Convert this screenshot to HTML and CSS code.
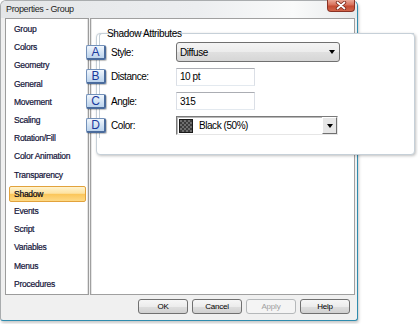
FILE: index.html
```html
<!DOCTYPE html>
<html>
<head>
<meta charset="utf-8">
<title>Properties - Group</title>
<link rel="stylesheet" href="styles.css">
</head>
<body>
<div class="dialog">
  <div class="titlebar">
    <span class="title">Properties - Group</span>
    <div class="close">
      <svg width="12" height="9" viewBox="0 0 12 9">
        <path d="M2.5 1.5 L9.5 7.5 M9.5 1.5 L2.5 7.5" stroke="#7a2a1c" stroke-width="3.4" stroke-linecap="round"/>
        <path d="M2.5 1.5 L9.5 7.5 M9.5 1.5 L2.5 7.5" stroke="#ffffff" stroke-width="1.7" stroke-linecap="round"/>
      </svg>
    </div>
  </div>
  <div class="main">
    <ul class="list">
      <li>Group</li>
      <li>Colors</li>
      <li>Geometry</li>
      <li>General</li>
      <li>Movement</li>
      <li>Scaling</li>
      <li>Rotation/Fill</li>
      <li>Color Animation</li>
      <li>Transparency</li>
      <li class="sel">Shadow</li>
      <li>Events</li>
      <li>Script</li>
      <li>Variables</li>
      <li>Menus</li>
      <li>Procedures</li>
    </ul>
    <div class="panel"></div>
  </div>
  <div class="footer">
    <button class="btn">OK</button>
    <button class="btn">Cancel</button>
    <button class="btn disabled">Apply</button>
    <button class="btn">Help</button>
  </div>
</div>

<div class="callout">
  <fieldset class="grp">
    <legend>Shadow Attributes</legend>
    <div class="row">
      <span class="badge">A</span>
      <span class="label">Style:</span>
      <div class="select"><span>Diffuse</span><span class="arrow"></span></div>
    </div>
    <div class="row">
      <span class="badge">B</span>
      <span class="label">Distance:</span>
      <div class="text">10 pt</div>
    </div>
    <div class="row">
      <span class="badge">C</span>
      <span class="label">Angle:</span>
      <div class="text">315</div>
    </div>
    <div class="row">
      <span class="badge">D</span>
      <span class="label">Color:</span>
      <div class="combo">
        <span class="swatch"></span>
        <span class="ctext">Black (50%)</span>
        <span class="dbtn"><span class="arrow"></span></span>
      </div>
    </div>
  </fieldset>
</div>
</body>
</html>
```

FILE: styles.css
```css
* { box-sizing: border-box; }
html, body { margin: 0; padding: 0; background: #ffffff; }
body {
  width: 418px;
  height: 324px;
  position: relative;
  overflow: hidden;
  font-family: "Liberation Sans", Arial, sans-serif;
  color: #000;
}

.dialog {
  width: 358px;
  height: 321px;
  background: #f0f0f0;
  border: 1px solid #a9acae;
  border-right-color: #2f8cae;
  border-bottom-color: #2f8cae;
  border-radius: 6px 6px 3px 3px;
  box-shadow: 1px 2px 3px rgba(0, 0, 0, 0.22);
  display: flex;
  flex-direction: column;
}

.titlebar {
  height: 17px;
  flex: none;
  display: flex;
  justify-content: space-between;
  align-items: flex-start;
  background: linear-gradient(to right, #e4e6e8 0%, #eceef0 55%, #f9fafa 82%, #e8eaeb 100%);
  border-radius: 5px 5px 0 0;
}
.title {
  font-size: 9px;
  letter-spacing: -0.35px;
  line-height: 17px;
  padding-left: 5px;
  color: #1e1e1e;
}
.close {
  width: 28px;
  height: 12px;
  margin: -1px 2px 0 0;
  border: 1px solid #8a3224;
  border-top: none;
  border-radius: 0 0 4px 4px;
  background: linear-gradient(#eaa896 0%, #d8705a 45%, #c34b31 55%, #d2654a 100%);
  display: flex;
  align-items: center;
  justify-content: center;
}
.close svg { display: block; }

.main {
  height: 277px;
  flex: none;
  display: flex;
  gap: 1px;
  padding: 0 2px 0 4px;
}
.list {
  width: 84px;
  margin: 0;
  padding: 1px 0 0 0;
  list-style: none;
  background: #fff;
  border: 1px solid #9c9c9c;
  box-shadow: inset -1px 0 0 #e4e4e4;
}
.list li {
  height: 18.2px;
  margin: 0 2px 0 3px;
  padding-left: 5px;
  display: flex;
  align-items: center;
  font-size: 8.5px;
  letter-spacing: -0.25px;
  color: #14143a;
  -webkit-text-stroke: 0.2px #14143a;
  white-space: nowrap;
}
.list li.sel {
  height: 16px;
  margin-top: 2px;
  margin-bottom: 0.2px;
  padding-left: 4px;
  border: 1px solid #e2a23c;
  border-radius: 2px;
  background: linear-gradient(#fff3cf 0%, #fde3a2 45%, #fbc65a 52%, #fdd985 100%);
  color: #000;
}
.panel {
  width: 265px;
  background: #fff;
  border: 1px solid #a0a0a0;
  box-shadow: inset 1px 0 0 #e6e6e6;
}

.footer {
  flex: 1;
  display: flex;
  justify-content: flex-end;
  align-items: flex-start;
  gap: 4px;
  padding: 4px 7px 0 0;
}
.btn {
  width: 50px;
  height: 15px;
  padding: 0;
  font-family: inherit;
  font-size: 8px;
  letter-spacing: -0.2px;
  line-height: 13px;
  color: #000;
  border: 1px solid #707070;
  border-radius: 3px;
  background: linear-gradient(#f6f6f6 0%, #ececec 50%, #dedede 52%, #d0d0d0 100%);
}
.btn.disabled {
  color: #a0a0a0;
  border-color: #b5b8ba;
  background: #f4f4f4;
}

/* overlay callout */
.callout {
  position: absolute;
  left: 96px;
  top: 33px;
  width: 319px;
  height: 122px;
  background: #fff;
  border: 1px solid #c6d0d8;
  border-radius: 4px;
  box-shadow: 1px 1px 3px rgba(0, 0, 0, 0.25);
}
.grp {
  margin: -7px 0 0 2px;
  padding: 0;
  min-width: 0;
  border: 1px solid #c6d0d8;
  border-right: none;
  border-bottom: none;
  border-radius: 3px 0 0 0;
}
.grp legend {
  margin-left: 5px;
  padding: 0 2px;
  font-size: 10px;
  letter-spacing: -0.35px;
  line-height: 13px;
  color: #000;
}
.row {
  height: 24.5px;
  display: flex;
  align-items: center;
  font-size: 10px;
  letter-spacing: -0.45px;
}
.badge {
  flex: none;
  width: 20px;
  height: 15px;
  margin-left: -14px;
  border: 1px solid #7391ba;
  border-right: 2px solid #4a6b9c;
  border-bottom: 2px solid #4a6b9c;
  border-radius: 2px;
  background: linear-gradient(#f2f7fd 0%, #d5e4f4 50%, #bcd3ec 100%);
  box-shadow: 1px 1px 1px rgba(0, 0, 0, 0.25);
  color: #1a3a9c;
  font-size: 12px;
  letter-spacing: 0;
  line-height: 12px;
  display: flex;
  align-items: center;
  justify-content: center;
}
.label {
  flex: none;
  width: 65px;
  margin-left: 5px;
}
.select {
  width: 164px;
  height: 20px;
  padding: 0 4px 0 3px;
  border: 1px solid #707070;
  border-radius: 3px;
  background: linear-gradient(#f4f4f4 0%, #ececec 50%, #e0e0e0 52%, #d6d6d6 100%);
  display: flex;
  align-items: center;
  justify-content: space-between;
}
.arrow {
  width: 0;
  height: 0;
  border-left: 3px solid transparent;
  border-right: 3px solid transparent;
  border-top: 4px solid #000;
}
.text {
  width: 79px;
  height: 18px;
  padding-left: 3px;
  border: 1px solid #dbdfe6;
  border-top-color: #abadb3;
  border-bottom-color: #e3e9ef;
  background: #fff;
  display: flex;
  align-items: center;
}
.combo {
  width: 162px;
  height: 19px;
  border: 1px solid;
  border-color: #7a7a7a #e6e6e6 #e6e6e6 #7a7a7a;
  box-shadow: inset 1px 1px 0 #b8b8b8;
  background: #fff;
  display: flex;
  align-items: center;
}
.swatch {
  flex: none;
  width: 14px;
  height: 14px;
  margin-left: 2px;
  border: 1px solid #1a1a1a;
  background: conic-gradient(#3c3c3c 25%, #6e6e6e 0 50%, #3c3c3c 0 75%, #6e6e6e 0) 0 0 / 4px 4px;
}
.ctext {
  flex: 1;
  margin-left: 6px;
}
.dbtn {
  flex: none;
  width: 15px;
  height: 17px;
  border: 1px solid;
  border-color: #ffffff #707070 #707070 #ffffff;
  background: #e6e6e6;
  display: flex;
  align-items: center;
  justify-content: center;
}
```
